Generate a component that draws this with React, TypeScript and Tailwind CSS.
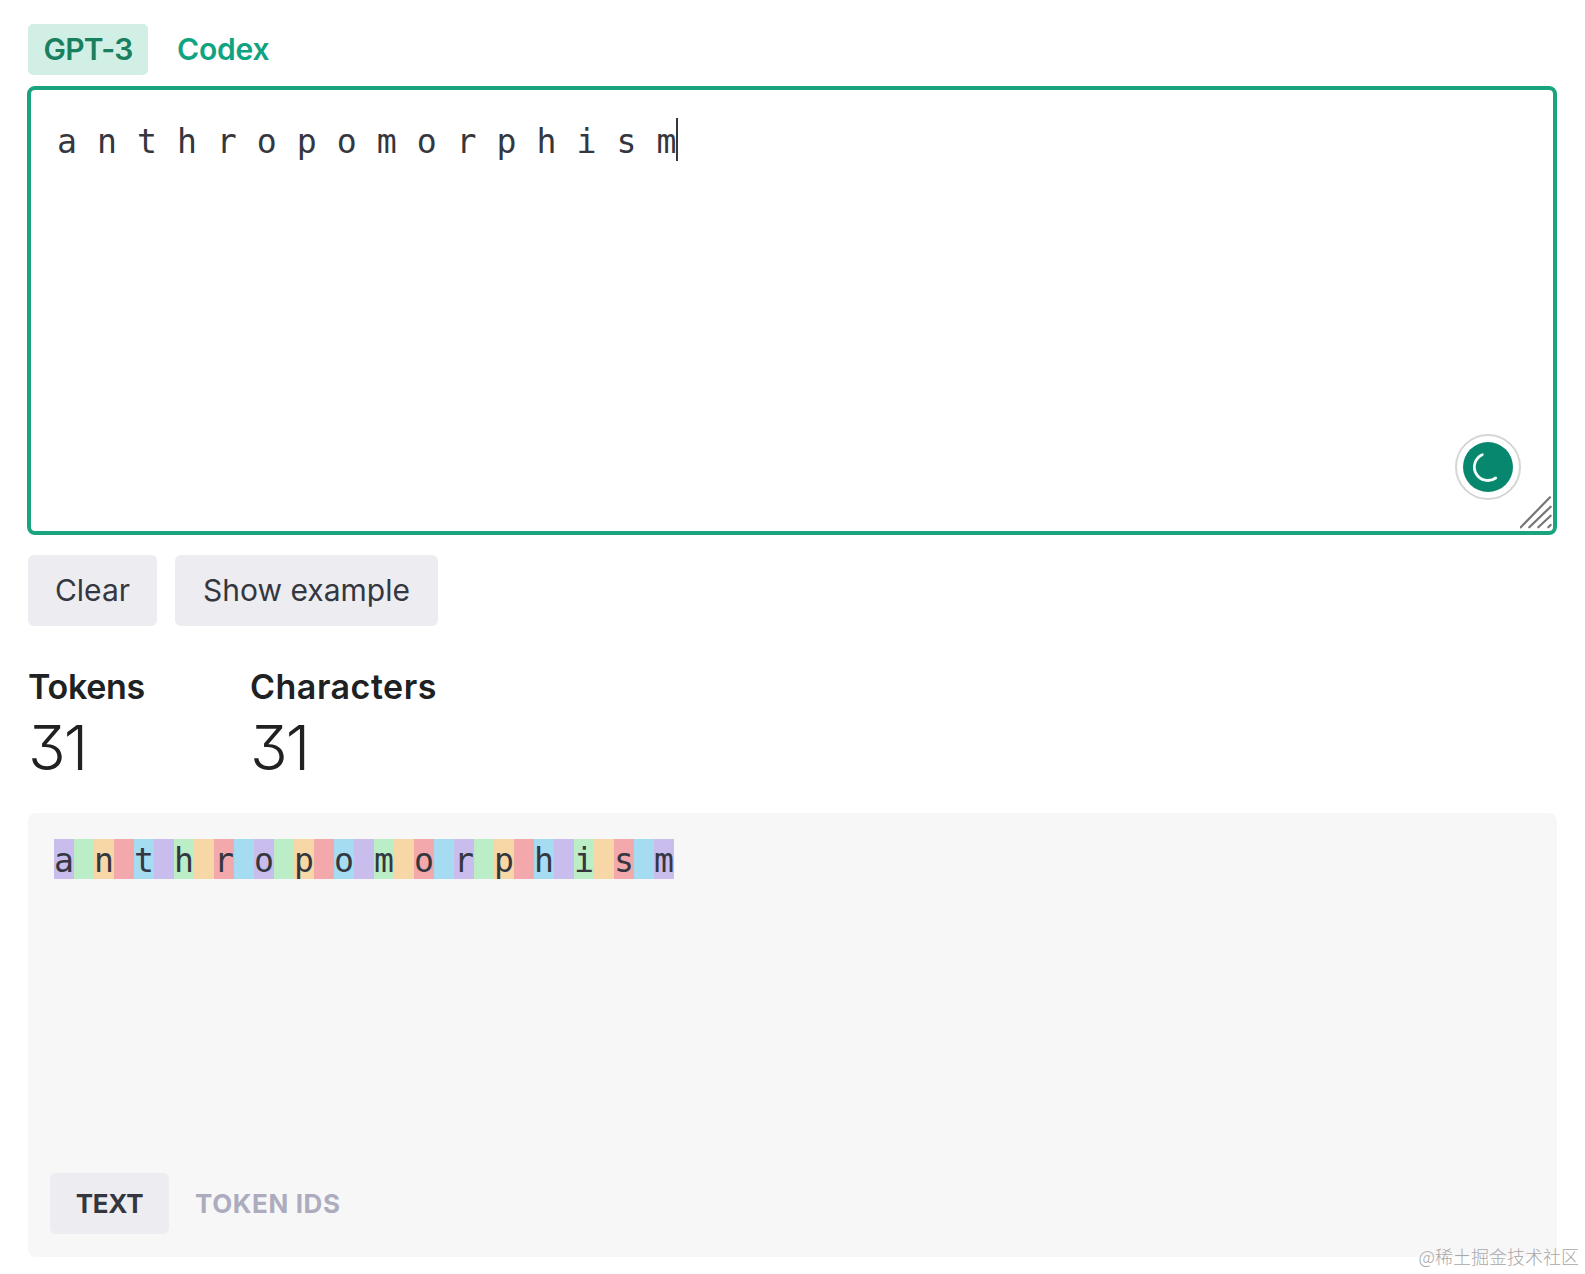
const TEXT = "a n t h r o p o m o r p h i s m";
const TOKEN_COLORS = [
  "bg-[#c9bdee]",
  "bg-[#bbedc6]",
  "bg-[#f8d7a6]",
  "bg-[#f3a9ac]",
  "bg-[#a5dcf2]",
];

function Spinner() {
  return (
    <div className="absolute right-[32px] bottom-[31px] flex h-[66px] w-[66px] items-center justify-center rounded-full border-2 border-[#d6d6d6] bg-white">
      <div className="h-[50px] w-[50px] rounded-full bg-[#08876f]">
        <svg width="50" height="50" viewBox="0 0 50 50" fill="none">
          <path d="M19.3 12.7 A13.5 13.5 0 1 0 32.7 36" stroke="#f2fbf8" strokeWidth="2.8" strokeLinecap="round" />
        </svg>
      </div>
    </div>
  );
}

function ResizeHandle() {
  return (
    <svg className="absolute right-0 bottom-px" width="33" height="35" viewBox="0 0 33 35" fill="none" stroke="#767676" strokeWidth="2.2" strokeLinecap="round">
      <line x1="0.7" y1="32.3" x2="30" y2="2.3" />
      <line x1="9.3" y1="32.3" x2="30.7" y2="11.7" />
      <line x1="18.3" y1="32.3" x2="30.7" y2="20.7" />
      <line x1="28.3" y1="32.3" x2="30.7" y2="30" />
    </svg>
  );
}

export default function App() {
  return (
    <div className="relative h-[1274px] overflow-hidden bg-white px-[28px] pt-[24px] font-['Inter','Liberation_Sans',sans-serif]">
      <div className="flex h-[51px] items-center">
        <div className="flex h-full w-[120px] items-center justify-center rounded-[5px] bg-[#d2efe6] text-[30px] font-semibold tracking-[-0.7px] text-[#1a7f5f]">
          GPT-3
        </div>
        <div className="ml-[29px] text-[30px] font-semibold tracking-[-0.2px] text-[#10a37f]">Codex</div>
      </div>

      <div className="relative mt-[11px] -ml-px h-[449px] rounded-[8px] border-[4px] border-[#19a37f] bg-white pt-[29px] pl-[26px]">
        <div className="flex h-[46px] items-center font-['DejaVu_Sans_Mono','Liberation_Mono',monospace] text-[33.2px] leading-[46px] whitespace-pre text-[#353740]">
          <span>{TEXT}</span>
          <span className="-mt-[5px] h-[43px] w-[2px] bg-[#353740]" />
        </div>
        <Spinner />
        <ResizeHandle />
      </div>

      <div className="mt-[20px] flex gap-[18px]">
        <button className="flex h-[71px] w-[129px] items-center justify-center rounded-[6px] bg-[#ececf1] text-[30px] text-[#353740]">
          Clear
        </button>
        <button className="flex h-[71px] w-[263px] items-center justify-center rounded-[6px] bg-[#ececf1] text-[30px] text-[#353740]">
          Show example
        </button>
      </div>

      <div className="mt-[39px] flex text-[#202123]">
        <div className="w-[222px]">
          <div className="text-[34px] leading-[44px] font-semibold tracking-[-0.3px]">Tokens</div>
          <div className="mt-[2px] text-[62px] leading-[74px] font-light tracking-[-2px] [font-feature-settings:'cv09']">31</div>
        </div>
        <div>
          <div className="text-[34px] leading-[44px] font-semibold tracking-[0.5px]">Characters</div>
          <div className="mt-[2px] text-[62px] leading-[74px] font-light tracking-[-2px] [font-feature-settings:'cv09']">31</div>
        </div>
      </div>

      <div className="mt-[28px] flex h-[444px] flex-col justify-between rounded-[8px] bg-[#f7f7f8] pt-[26px] pb-[23px] pl-[22px]">
        <div className="flex pl-[4px] font-['DejaVu_Sans_Mono','Liberation_Mono',monospace] text-[33.2px] whitespace-pre text-[#353740]">
          {TEXT.split("").map((ch, i) => (
            <span key={i} className={`h-[40px] w-[20px] leading-[43px] ${TOKEN_COLORS[i % 5]}`}>
              {ch}
            </span>
          ))}
        </div>
        <div className="flex items-center">
          <div className="flex h-[61px] w-[119px] items-center justify-center rounded-[6px] bg-[#ececf1] text-[26px] font-bold tracking-[-0.3px] text-[#353740]">
            TEXT
          </div>
          <div className="ml-[26px] text-[26px] font-bold tracking-[0.6px] text-[#acacbe]">TOKEN IDS</div>
        </div>
      </div>

      <div className="absolute top-[1243px] right-[6px] font-['Noto_Sans_CJK_SC',sans-serif] text-[18px] leading-[26px] font-light whitespace-nowrap text-[#a8a8a8]">
        @稀土掘金技术社区
      </div>
    </div>
  );
}
